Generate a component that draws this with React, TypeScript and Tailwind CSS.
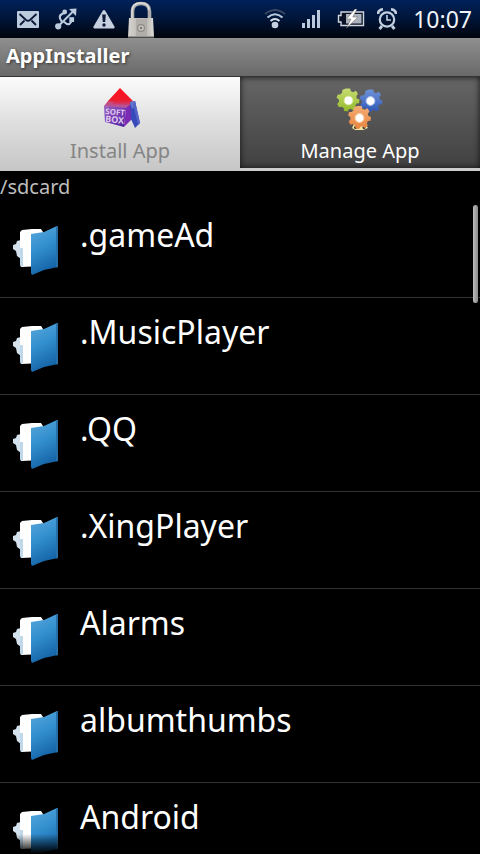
import React, { useState } from 'react';

const folders = ['.gameAd', '.MusicPlayer', '.QQ', '.XingPlayer', 'Alarms', 'albumthumbs', 'Android'];

const MailIcon = () => (
  <svg width="22" height="17" viewBox="0 0 22 17">
    <rect width="22" height="17" rx="1" fill="#bccadd" />
    <path d="M2.5 3 L9 9 Q11 10.5 13 9 L19.5 3 M3 14 L7.5 9.5 M19 14 L14.5 9.5" fill="none" stroke="#0a1836" strokeWidth="1.8" />
  </svg>
);

const UsbIcon = () => (
  <svg width="22" height="22" viewBox="0 0 22 22" fill="none" stroke="#bccadd" strokeWidth="2">
    <path d="M3 18.5 L19 2.5" />
    <path d="M14 1 L21.5 .5 L21 8 Z" fill="#bccadd" stroke="none" />
    <path d="M7 14 L5 10.5 Q4 7.5 7 6 L10 4.5 M8.5 13.5 L12 16 Q14.5 17 16 14 L17 11" />
    <circle cx="3.2" cy="18.3" r="3.1" fill="#bccadd" stroke="none" />
    <circle cx="9.7" cy="4" r="2.4" fill="#bccadd" stroke="none" />
    <rect x="14.3" y="9.2" width="4.8" height="4.8" fill="#bccadd" stroke="none" />
  </svg>
);

const WarningIcon = () => (
  <svg width="22" height="19" viewBox="0 0 22 19">
    <path d="M11 0 Q11.8 0 12.4 1 L21.6 16.8 Q22 18.5 20.5 18.5 H1.5 Q0 18.5 .4 16.8 L9.6 1 Q10.2 0 11 0 Z" fill="#c7d0e0" />
    <path d="M9.2 4.5 H12.8 L12.2 12 H9.8 Z" fill="#0a1836" />
    <circle cx="11" cy="15" r="1.7" fill="#0a1836" />
  </svg>
);

const LockIcon = () => (
  <svg width="28" height="37" viewBox="0 0 28 37">
    <defs>
      <linearGradient id="lockBody" x1="0" x2="1">
        <stop offset="0" stopColor="#d6d4d0" />
        <stop offset=".3" stopColor="#c4c1bd" />
        <stop offset=".7" stopColor="#bab7b3" />
        <stop offset="1" stopColor="#dedcd8" />
      </linearGradient>
    </defs>
    <path d="M5.5 19 V10.5 Q5.5 2.5 14 2.5 Q22.5 2.5 22.5 10.5 V19" fill="none" stroke="#aeadac" strokeWidth="3.6" />
    <path d="M5 19 V10.5 Q5 2 14 2 Q21.5 2 22 9" fill="none" stroke="#dddddb" strokeWidth="1.5" />
    <path d="M2 17 H26 L27 36 H1 Z" fill="url(#lockBody)" />
    <rect x="9" y="18" width="11" height="17" fill="#b1aeaa" />
    <circle cx="14" cy="27" r="3.4" fill="#c9c6c2" stroke="#8c8984" strokeWidth="1.2" />
    <circle cx="14" cy="27" r="1.2" fill="#77746f" />
    <path d="M1 35 H27 V36.5 H1 Z" fill="#97948f" />
  </svg>
);

const WifiIcon = () => (
  <svg width="22" height="20" viewBox="0 0 22 20" fill="none" strokeWidth="2">
    <path d="M1 5 Q11 -3 21 5" stroke="#3a4864" />
    <path d="M3.5 8.5 Q11 2 18.5 8.5" stroke="#bccadd" />
    <path d="M6.5 12 Q11 8 15.5 12" stroke="#d5dce8" />
    <circle cx="11" cy="16" r="3.3" fill="#c7d0e0" />
  </svg>
);

const SignalIcon = () => (
  <svg width="19" height="18" viewBox="0 0 19 18" fill="#bccadd">
    <rect x="0" y="13" width="3" height="5" />
    <rect x="5" y="9" width="3" height="9" />
    <rect x="10" y="5" width="3" height="13" />
    <rect x="15" y="0" width="3" height="18" />
  </svg>
);

const BatteryIcon = () => (
  <svg width="28" height="20" viewBox="0 0 28 20">
    <path d="M4 3 H26.5 V16.5 H4 V13 H1.5 V6.5 H4 Z" fill="#0a1326" stroke="#d0d5de" strokeWidth="1.4" />
    <rect x="9" y="5" width="15.5" height="9.5" fill="#aab2be" />
    <path d="M18 0 L9.5 10 H14 L9.5 19 L21 8 H15.8 L20 0 Z" fill="#fff" stroke="#6b625b" strokeWidth=".5" />
  </svg>
);

const AlarmIcon = () => (
  <svg width="20" height="22" viewBox="0 0 20 22" fill="none" stroke="#c4d0e0">
    <circle cx="10" cy="11.5" r="7.2" strokeWidth="2.2" />
    <path d="M1 6 Q1 2 6 1.2 M19 6 Q19 2 14 1.2" strokeWidth="2.6" />
    <path d="M5 18 L2.5 21 M15 18 L17.5 21" strokeWidth="2.8" />
    <path d="M10 7 V12 H14" strokeWidth="1.6" />
  </svg>
);

const SoftBoxIcon = () => (
  <svg width="38" height="42" viewBox="0 0 38 42">
    <defs>
      <linearGradient id="boxFront" x1="0" y1="0" x2="1" y2="1">
        <stop offset="0" stopColor="#9a62bd" />
        <stop offset=".6" stopColor="#7236b2" />
        <stop offset="1" stopColor="#46209a" />
      </linearGradient>
      <linearGradient id="boxTop" x1="0" y1="0" x2="0" y2="1">
        <stop offset="0" stopColor="#d8456a" />
        <stop offset="1" stopColor="#a15bb0" />
      </linearGradient>
      <linearGradient id="boxArrow" x1="0" y1="0" x2="0" y2="1">
        <stop offset="0" stopColor="#ff0f1c" />
        <stop offset=".7" stopColor="#ee1a2a" />
        <stop offset="1" stopColor="#c64178" />
      </linearGradient>
    </defs>
    <path d="M6 14 L13 13 L30 15 L25 23 L2 19 Z" fill="url(#boxTop)" />
    <path d="M2 19 L24 21 L22 40 L3 35 Z" fill="url(#boxFront)" />
    <path d="M24 21 L30 16 L30 32 L22 40 Z" fill="#7b2bb4" />
    <path d="M18 1 L31 14 L27 18 L10 17 L12 15 L6 14 Z" fill="url(#boxArrow)" />
    <path d="M28 15 L33 14 L38 36 L33 41 L29 32 Z" fill="#3749bb" />
    <path d="M28 15 L33 14 L34 19 L30 22 Z" fill="#6478d0" />
    <path d="M33 14 L38 36 L36 38 L31 17 Z" fill="#5264c8" />
    <text x="3" y="27" fontSize="8" fontWeight="700" fill="#dcc8ec" transform="rotate(5 3 27)">SOFT</text>
    <text x="3" y="35" fontSize="9" fontWeight="700" fill="#dcc8ec" transform="rotate(5 3 35)">BOX</text>
  </svg>
);

const gearPath =
  'M-2.2 -11.5 L2.2 -11.5 L2.8 -8.8 L5 -7.8 L8 -9.3 L10 -6 L8.3 -4 L8.9 -1.5 L11.5 -.5 L11 3.2 L8.4 3.5 L7.4 5.5 L8.2 8.3 L5.2 10.5 L3 8.8 L1 9.2 L-.6 11.5 L-4 10.8 L-4.3 8.1 L-6.4 6.8 L-9 7.2 L-10.8 4 L-9 1.8 L-9.2 -.5 L-11.5 -2.2 L-10.2 -5.5 L-7.6 -5.4 L-5.8 -7.4 L-5.8 -10 Z';

const GearsIcon = () => (
  <svg width="48" height="44" viewBox="0 0 48 44">
    <defs>
      <linearGradient id="gearGreen" x1="0" y1="0" x2="0" y2="1">
        <stop offset="0" stopColor="#c6dc72" />
        <stop offset="1" stopColor="#94b92a" />
      </linearGradient>
      <linearGradient id="gearBlue" x1="0" y1="0" x2="0" y2="1">
        <stop offset="0" stopColor="#6f93da" />
        <stop offset="1" stopColor="#2d56b4" />
      </linearGradient>
      <linearGradient id="gearOrange" x1="0" y1="0" x2="0" y2="1">
        <stop offset="0" stopColor="#f3ad76" />
        <stop offset="1" stopColor="#e8843f" />
      </linearGradient>
    </defs>
    <path d="M18 37 L29 37 L32 41 L27 43 H19 L16 41 Z" fill="#f3e3a0" />
    <circle cx="19.5" cy="40.5" r="1.5" fill="#333" />
    <circle cx="28" cy="40.5" r="1.5" fill="#333" />
    <path d={gearPath} transform="translate(12 13)" fill="url(#gearGreen)" />
    <path d={gearPath} transform="translate(35 14)" fill="url(#gearBlue)" />
    <path d={gearPath} transform="translate(23.5 30.5)" fill="url(#gearOrange)" />
    <circle cx="12.5" cy="13.5" r="4.4" fill="#fff" stroke="#d9e99b" />
    <circle cx="34.5" cy="14" r="4.4" fill="#fff" stroke="#a9c1f0" />
    <circle cx="23.5" cy="31" r="4.4" fill="#fff" stroke="#fbd0a5" />
  </svg>
);

const FolderIcon = () => (
  <svg width="48" height="52" viewBox="0 0 48 52" className="shrink-0">
    <defs>
      <linearGradient id="folderFront" x1="0" y1="0" x2=".3" y2="1">
        <stop offset="0" stopColor="#5aa9dc" />
        <stop offset=".5" stopColor="#338fce" />
        <stop offset="1" stopColor="#1565a8" />
      </linearGradient>
    </defs>
    <path d="M1 21 L4 20 L5 17 L9 16 V35 L5 32 L4 27 L1 25 Z" fill="#d3e2ec" />
    <path d="M8 8 L10 6 L20 5 L29 5 L31 8 V42 L9 43 L8 40 Z" fill="#fff" />
    <path d="M8 24 H11 V42 L9 43 L8 40 Z" fill="#bfd9ea" />
    <path d="M19 10 L32 8 L45 2 L46 4 V43 L32 46 L20 51 L19 49 Z" fill="url(#folderFront)" />
    <path d="M44 2.5 L46 2 V43 L44 43.5 Z" fill="#2a6fa5" />
  </svg>
);

const StatusBar = () => (
  <div className="flex h-[38px] shrink-0 items-center bg-linear-to-b from-[#00215a] via-[#001538] to-[#00050d] px-2">
    <div className="flex items-center gap-4 pl-[9px]">
      <MailIcon />
      <UsbIcon />
      <WarningIcon />
    </div>
    <div className="ml-3">
      <LockIcon />
    </div>
    <div className="ml-auto flex items-center gap-4">
      <WifiIcon />
      <SignalIcon />
      <div className="flex items-center gap-3">
        <BatteryIcon />
        <AlarmIcon />
      </div>
      <span className="text-[23px] text-[#f0f3f8]">10:07</span>
    </div>
  </div>
);

const App = () => {
  const [tab, setTab] = useState('install');

  return (
    <div className="flex h-screen flex-col overflow-hidden bg-black font-['Noto_Sans','Open_Sans',sans-serif] text-white">
      <StatusBar />

      <header className="h-[39px] shrink-0 border-b border-[#333] bg-linear-to-b from-[#8f8f8f] to-[#696969] px-1.5">
        <h1 className="text-xl leading-9 font-bold [text-shadow:1px_1px_3px_#333]">AppInstaller</h1>
      </header>

      <div role="tablist" className="grid h-[94px] shrink-0 grid-cols-2">
        <button
          type="button"
          role="tab"
          aria-selected={tab === 'install'}
          onClick={() => setTab('install')}
          className="flex flex-col items-center bg-linear-to-b from-[#fcfcfc] via-[#dedede] to-[#c6c6c6] pt-2.5 text-[#858585]"
        >
          <span className="flex h-12 items-start pl-0.5"><SoftBoxIcon /></span>
          <span className="text-xl leading-8">Install App</span>
        </button>
        <button
          type="button"
          role="tab"
          aria-selected={tab === 'manage'}
          onClick={() => setTab('manage')}
          className="flex flex-col items-center border-b-3 border-[#cdcdcd] bg-linear-to-b from-[#666] to-[#414141] pt-2.5 shadow-[inset_0_0_6px_#111]"
        >
          <span className="flex h-12 items-start"><GearsIcon /></span>
          <span className="text-xl leading-8">Manage App</span>
        </button>
      </div>

      <p className="h-[30px] shrink-0 text-xl leading-8 text-[#bebebe]">/sdcard</p>

      <main className="relative min-h-0 flex-1 overflow-hidden">
        <ul>
          {folders.map((name) => (
            <li key={name} className="flex h-[97px] items-center gap-5 border-b border-[#333] pt-0.5 pl-3">
              <FolderIcon />
              <span className="h-[74px] text-[32px] leading-11">{name}</span>
            </li>
          ))}
        </ul>
        <div className="absolute top-1 right-0.5 h-[98px] w-[5px] rounded-full bg-linear-to-r from-[#bbb] to-[#8b8b8b]" />
        <div className="absolute inset-x-0 bottom-0 h-5 bg-linear-to-b from-transparent to-black" />
      </main>
    </div>
  );
};

export default App;
